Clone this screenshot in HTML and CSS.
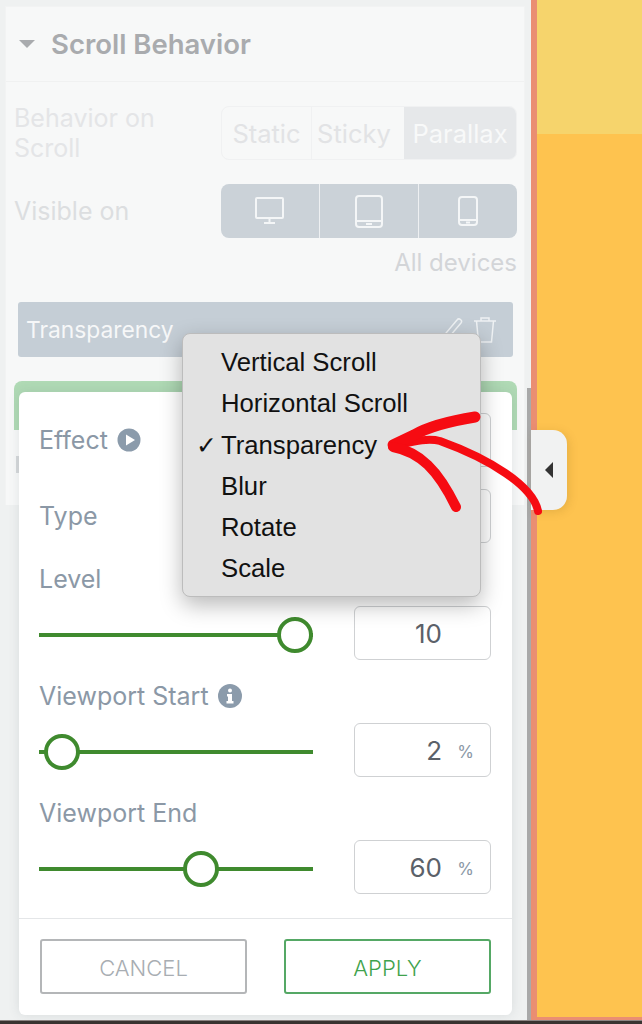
FILE: index.html
```html
<!DOCTYPE html>
<html lang="en">
<head>
    <meta charset="UTF-8">
    <meta name="viewport" content="width=device-width, initial-scale=1.0">
    <title>Scroll Behavior</title>
    <link rel="stylesheet" href="styles.css">
</head>
<body>
    <div class="screen">
        <div class="workspace">
            <aside class="sidebar">
                <section class="panel">
                    <header class="panel-head">
                        <span class="caret"></span>
                        <h2>Scroll Behavior</h2>
                    </header>

                    <div class="panel-body">
                        <div class="field-row">
                            <label class="faded">Behavior on Scroll</label>
                            <div class="segments">
                                <span class="seg-static">Static</span>
                                <span class="seg-sticky">Sticky</span>
                                <span class="seg-parallax">Parallax</span>
                            </div>
                        </div>

                        <div class="field-row devices-row">
                            <label class="visible-label">Visible on</label>
                            <div class="devices">
                                <span>
                                    <svg width="30" height="28" viewBox="0 0 30 28" fill="none" stroke="#f4f6f7" stroke-width="2">
                                        <rect x="1" y="1" width="27" height="20" rx="1"/>
                                        <path d="M14.500 21v4M9 26h11"/>
                                    </svg>
                                </span>
                                <span>
                                    <svg width="28" height="33" viewBox="0 0 28 33" fill="none" stroke="#f4f6f7" stroke-width="2">
                                        <rect x="1" y="1" width="26" height="31" rx="3"/>
                                        <path d="M1 26h26M11 29h6"/>
                                    </svg>
                                </span>
                                <span>
                                    <svg width="20" height="30" viewBox="0 0 20 30" fill="none" stroke="#f4f6f7" stroke-width="2">
                                        <rect x="1" y="1" width="18" height="28" rx="3"/>
                                        <path d="M1 24h18M8 26.500h4"/>
                                    </svg>
                                </span>
                            </div>
                        </div>

                        <p class="devices-note">All devices</p>

                        <div class="effect-bar">
                            <span>Transparency</span>
                            <div class="effect-actions">
                                <svg width="22" height="26" viewBox="0 0 22 26" fill="none" stroke="#eef1f3" stroke-width="1.500">
                                    <path d="M2 22l2-6L15 3a2.500 2.500 0 0 1 4 3L8 19z"/>
                                </svg>
                                <svg width="24" height="28" viewBox="0 0 24 28" fill="none" stroke="#eef1f3" stroke-width="1.500">
                                    <path d="M1 5h22M8 5V2h8v3M3.500 5l2 21h13l2-21"/>
                                </svg>
                            </div>
                        </div>

                        <div class="effect-edit"></div>
                        <div class="effect-peek"></div>
                    </div>
                </section>
                <div class="scrollbar"></div>
            </aside>

            <main class="canvas">
                <div class="canvas-top"></div>
                <div class="canvas-main"></div>
            </main>
        </div>
        <div class="bottom-edge"></div>

        <button class="collapse-tab" type="button"><span></span></button>

        <!-- effect settings modal -->
        <form class="modal">
            <div class="modal-body">
                <div class="modal-row">
                    <label>Effect
                        <svg class="hint" width="24" height="24" viewBox="0 0 24 24">
                            <circle cx="12" cy="12" r="11.500" fill="#8b9bab"/>
                            <path d="M9 6.500l9 5.500-9 5.500z" fill="#fff"/>
                        </svg>
                    </label>
                    <div class="box"></div>
                </div>
                <div class="modal-row type-row">
                    <label>Type</label>
                    <div class="box"></div>
                </div>

                <label class="slider-label">Level</label>
                <div class="modal-row">
                    <div class="slider"><span class="thumb" style="left: 93.400%"></span></div>
                    <div class="box value">10</div>
                </div>

                <label class="slider-label">Viewport Start
                    <svg class="hint" width="24" height="24" viewBox="0 0 24 24">
                        <circle cx="12" cy="12" r="12" fill="#8b9bab"/>
                        <circle cx="12" cy="6.500" r="2" fill="#fff"/>
                        <path d="M9 10h5v7h1.500v2.500h-7V17H10v-4.500H9z" fill="#fff"/>
                    </svg>
                </label>
                <div class="modal-row">
                    <div class="slider"><span class="thumb" style="left: 8.400%"></span></div>
                    <div class="box value">2<small>%</small></div>
                </div>

                <label class="slider-label">Viewport End</label>
                <div class="modal-row">
                    <div class="slider"><span class="thumb" style="left: 59.100%"></span></div>
                    <div class="box value">60<small>%</small></div>
                </div>
            </div>

            <footer class="modal-foot">
                <button class="btn btn-cancel" type="button">CANCEL</button>
                <button class="btn btn-apply" type="button">APPLY</button>
            </footer>
        </form>

        <!-- native select menu -->
        <ul class="menu">
            <li>Vertical Scroll</li>
            <li>Horizontal Scroll</li>
            <li class="checked">Transparency</li>
            <li>Blur</li>
            <li>Rotate</li>
            <li>Scale</li>
        </ul>

        <!-- hand drawn annotation -->
        <svg class="arrow" width="642" height="1024" viewBox="0 0 642 1024" fill="none" stroke="#f60b12" stroke-linecap="round" stroke-linejoin="round">
            <path d="M538 511C533 486 490 459 440 441C425 437 405 444 392 446" stroke-width="8"/>
            <path d="M475 417C450 421 428 427 414 435L393 445" stroke-width="11"/>
            <path d="M393 447C420 452 438 470 456 507" stroke-width="10"/>
        </svg>
    </div>
</body>
</html>
```
FILE: styles.css
```css
* {
    box-sizing: border-box;
}

html, body {
    margin: 0;
    padding: 0;
}

body {
    font-family: 'Inter', 'Noto Sans', sans-serif;
    background: #2f2a28;
}

.screen {
    position: relative;
    width: 642px;
    height: 1024px;
    overflow: hidden;
    display: flex;
    flex-direction: column;
}

.workspace {
    display: flex;
    height: 1020px;
}

.bottom-edge {
    height: 4px;
    background: #3a3431;
    border-top: 1px solid #8d8684;
}

/* sidebar */
.sidebar {
    position: relative;
    width: 531px;
    padding: 6px 6px 0 5px;
    background: #eff1f1;
}

.panel {
    height: 499px;
    background: #f7f8f8;
    border: 1px solid #f2f3f3;
    border-bottom: none;
}

.panel-head {
    display: flex;
    align-items: center;
    gap: 16px;
    height: 75px;
    padding-left: 13px;
    border-bottom: 1px solid #f0f1f1;
}

.panel-head h2 {
    margin: 0;
    font-size: 27.500px;
    font-weight: 600;
    color: #a9abae;
}

.caret {
    width: 0;
    height: 0;
    border-left: 8px solid transparent;
    border-right: 8px solid transparent;
    border-top: 8px solid #a9abae;
}

.panel-body {
    padding: 24px 7px 0 8px;
}

.field-row {
    display: flex;
    justify-content: space-between;
    align-items: center;
    height: 54px;
}

.field-row label {
    width: 170px;
    font-size: 25px;
    line-height: 30px;
}

.faded {
    color: #e4e5e7;
}

.visible-label {
    color: #dcdee0;
}

.segments {
    display: flex;
    width: 296px;
    height: 54px;
    border: 1px solid #f0f1f2;
    border-radius: 8px;
    overflow: hidden;
    font-size: 25.500px;
    color: #e2e3e5;
}

.segments span {
    display: flex;
    align-items: center;
    justify-content: center;
}

.seg-static {
    width: 90px;
    border-right: 1px solid #f0f1f2;
}

.seg-sticky {
    width: 92px;
    padding-right: 8px;
}

.seg-parallax {
    flex: 1;
    background: #e6e8ea;
    color: #f8f9f9;
}

.devices-row {
    margin-top: 24px;
}

.devices {
    display: flex;
    width: 296px;
    height: 54px;
    background: #cbd2d8;
    border-radius: 8px;
}

.devices span {
    flex: 1;
    display: flex;
    align-items: center;
    justify-content: center;
    border-right: 1px solid #eef0f2;
}

.devices span:last-child {
    border-right: none;
}

.devices-note {
    margin: 10px 0 0;
    text-align: right;
    font-size: 24px;
    line-height: 30px;
    color: #d3d5d8;
}

.effect-bar {
    display: flex;
    justify-content: space-between;
    align-items: center;
    height: 55px;
    margin: 24px 4px 0 4px;
    padding: 0 16px 0 8px;
    background: #c5ced6;
    border-radius: 3px;
    font-size: 22.800px;
    color: #f6f7f8;
}

.effect-actions {
    display: flex;
    align-items: center;
    gap: 9px;
}

.effect-edit {
    height: 49px;
    margin: 24px 0 0 0;
    background: #b0dab5;
    border-radius: 8px 8px 0 0;
}

.effect-peek {
    width: 3px;
    height: 17px;
    margin: 26px 0 0 2px;
    background: #d5d8da;
}

.scrollbar {
    position: absolute;
    top: 388px;
    right: 0;
    bottom: 0;
    width: 4px;
    background: #a9a9a9;
}

/* canvas */
.canvas {
    flex: 1;
    display: flex;
    flex-direction: column;
    border-left: 6px solid #ea8e72;
    border-bottom: 3px solid #ea8e72;
}

.canvas-top {
    height: 134px;
    background: #f6d46c;
}

.canvas-main {
    flex: 1;
    background: #fec34f;
}

.collapse-tab {
    position: absolute;
    left: 531px;
    top: 430px;
    width: 36px;
    height: 80px;
    display: flex;
    align-items: center;
    justify-content: center;
    padding: 0;
    border: none;
    border-radius: 0 14px 14px 0;
    background: #f1f2f2;
    box-shadow: 2px 2px 10px rgba(120, 90, 20, 0.18);
}

.collapse-tab span {
    width: 0;
    height: 0;
    border-top: 8px solid transparent;
    border-bottom: 8px solid transparent;
    border-right: 8px solid #333;
}

/* modal */
.modal {
    position: absolute;
    left: 19px;
    top: 392px;
    width: 493px;
    height: 623px;
    display: flex;
    flex-direction: column;
    background: #fff;
    border-radius: 6px;
    box-shadow: 0 0 12px rgba(60, 70, 80, 0.12);
    color: #8b98a6;
    font-size: 25px;
}

.modal-body {
    flex: 1;
    padding: 21px 21px 0 20px;
}

.modal-row {
    display: flex;
    justify-content: space-between;
    align-items: center;
    height: 54px;
}

.type-row {
    margin-top: 22px;
}

.modal label {
    display: flex;
    align-items: center;
    gap: 9px;
    line-height: 30px;
}

.slider-label {
    margin: 21px 0 12px;
}

.box {
    width: 137px;
    height: 54px;
    border: 1px solid #cfd1d3;
    border-radius: 6px;
}

.value {
    display: flex;
    align-items: center;
    justify-content: flex-end;
    padding-right: 48px;
    position: relative;
    font-size: 26px;
    color: #5b6169;
}

.value small {
    position: absolute;
    right: 16px;
    top: 18px;
    font-size: 17px;
    color: #8b98a6;
}

.slider {
    position: relative;
    width: 274px;
    height: 4px;
    margin-top: 4px;
    background: #3f8a2e;
}

.thumb {
    position: absolute;
    top: 50%;
    width: 36px;
    height: 36px;
    margin: -18px 0 0 -18px;
    border: 4px solid #3f8a2e;
    border-radius: 50%;
    background: #fff;
}

.modal-foot {
    display: flex;
    justify-content: space-between;
    height: 97px;
    padding: 20px 21px;
    border-top: 1px solid #e4e6e8;
}

.btn {
    width: 207px;
    height: 55px;
    padding-top: 3px;
    background: #fff;
    border-radius: 3px;
    font-family: inherit;
    font-size: 22px;
    font-weight: 300;
}

.btn-cancel {
    border: 2px solid #b4b6b8;
    color: #a8adb2;
}

.btn-apply {
    border: 2px solid #55a865;
    color: #3fa34d;
}

/* dropdown */
.menu {
    position: absolute;
    left: 182px;
    top: 333px;
    width: 299px;
    height: 264px;
    margin: 0;
    padding: 8px 0 8px 38px;
    list-style: none;
    background: #e2e2e2;
    border: 1px solid #bcbcbc;
    border-radius: 8px;
    box-shadow: 0 8px 22px rgba(0, 0, 0, 0.28);
    font-family: 'Liberation Sans', Arial, sans-serif;
    font-size: 25.700px;
    line-height: 41.300px;
    color: #111;
}

.menu .checked {
    position: relative;
}

.menu .checked::before {
    content: "\2713";
    position: absolute;
    left: -25px;
    font-family: 'DejaVu Sans', sans-serif;
    font-size: 25px;
}

.arrow {
    position: absolute;
    left: 0;
    top: 0;
    pointer-events: none;
}
```
